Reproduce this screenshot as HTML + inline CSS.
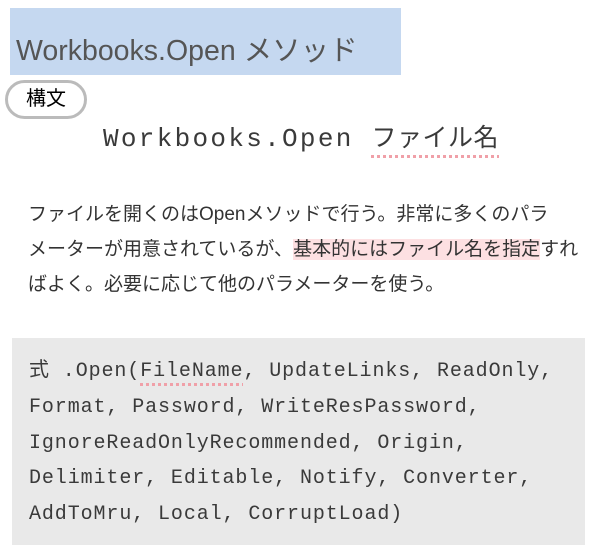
<!DOCTYPE html>
<html><head><meta charset="utf-8"><style>
body{margin:0;width:600px;height:553px;background:#fff;position:relative;overflow:hidden;font-family:"Liberation Sans","Noto Sans CJK JP",sans-serif}
.h{position:absolute;left:10px;top:8px;width:391px;height:67px;background:#c5d8f0}
.h span{position:absolute;left:6px;top:20px;font-size:28.5px;color:#555;white-space:nowrap}
.pill{position:absolute;left:5px;top:80px;width:76px;height:33px;border:3px solid #bbb;border-radius:20px;font-size:20px;text-align:center;line-height:32px;color:#000}
.t{position:absolute;left:103px;top:118px;font-family:"Liberation Mono","Noto Sans CJK JP",monospace;font-size:26px;letter-spacing:2.3px;color:#3a3a3a;white-space:nowrap}
.t .u{font-size:25px;letter-spacing:0.5px}
.u{text-decoration:underline dotted #f0a0a8 3px;text-underline-offset:9px}
.p{position:absolute;left:28px;top:197px;font-size:19px;line-height:35px;color:#333;white-space:nowrap}
.hl{background:#fde0e2}
.c{position:absolute;left:12px;top:338px;width:573px;height:207px;background:#e9e9e9}
.c pre{margin:0;position:absolute;left:17px;top:16px;font-family:"Liberation Mono","Noto Sans CJK JP",monospace;font-size:20px;letter-spacing:0.9px;line-height:35.8px;color:#3a3a3a}
.c .u{text-underline-offset:7px}
</style></head><body>
<div class="h"><span>Workbooks.Open メソッド</span></div>
<div class="pill">構文</div>
<div class="t">Workbooks.Open <span class="u">ファイル名</span></div>
<div class="p">ファイルを開くのはOpenメソッドで行う。非常に多くのパラ<br>メーターが用意されているが、<span class="hl">基本的にはファイル名を指定</span>すれ<br>ばよく。必要に応じて他のパラメーターを使う。</div>
<div class="c"><pre>式 .Open(<span class="u">FileName</span>, UpdateLinks, ReadOnly,
Format, Password, WriteResPassword,
IgnoreReadOnlyRecommended, Origin,
Delimiter, Editable, Notify, Converter,
AddToMru, Local, CorruptLoad)</pre></div>
</body></html>
